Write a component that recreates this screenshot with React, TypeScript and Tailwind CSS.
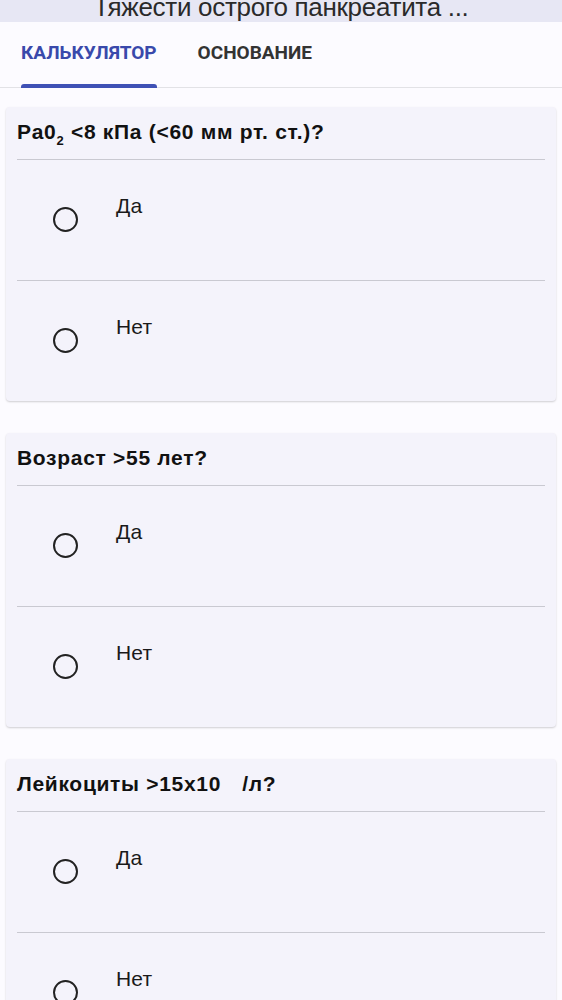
import React from "react";

const font = { fontFamily: '"Liberation Sans", Arial, sans-serif' };

function Radio() {
  return (
    <div className="w-[25px] h-[25px] rounded-full border-[2.5px] border-[#222] shrink-0" />
  );
}

function Option({ label }: { label: string }) {
  return (
    <div className="border-t border-[#c9c9d1] h-[121px] flex items-start pl-[36px]">
      <div className="mt-[47px]">
        <Radio />
      </div>
      <div className="ml-[38px] mt-[34px] text-[21px] leading-[24px] tracking-[0.2px] text-[#1a1a1a]">{label}</div>
    </div>
  );
}

function Card({ title }: { title: React.ReactNode }) {
  return (
    <div className="mx-[6px] bg-[#f4f3fb] rounded-[4px] shadow-[0_1px_2px_rgba(0,0,0,0.18)]">
      <div className="h-[52px] px-[11px] pt-[13px] text-[21px] leading-[24px] tracking-[0.7px] font-bold text-[#111]">
        {title}
      </div>
      <div className="mx-[11px]">
        <Option label="Да" />
        <Option label="Нет" />
      </div>
    </div>
  );
}

export default function App() {
  return (
    <div style={font} className="w-[562px] h-[1000px] overflow-hidden bg-[#fcfbff]">
      <div className="h-[22px] bg-[#e7e7f4] overflow-hidden relative">
        <div className="absolute left-0 right-0 top-[-7px] text-center text-[26px] leading-[28px] tracking-[-0.3px] text-[#2a2a2a]">
          Тяжести острого панкреатита ...
        </div>
      </div>
      <div className="h-[66px] flex items-stretch px-[21px] gap-[41px] border-b border-[#e2e2e6] bg-[#fcfbff]" style={{ fontFamily: 'Roboto, "Liberation Sans", sans-serif' }}>
        <div className="relative flex items-center pb-[3px]">
          <span className="text-[19px] font-bold text-[#3949ab]">КАЛЬКУЛЯТОР</span>
          <div className="absolute left-0 right-0 bottom-[-1px] h-[4px] bg-[#3f51b5] rounded-t-[3px]" />
        </div>
        <div className="flex items-center pb-[3px]">
          <span className="text-[19px] font-bold text-[#333]">ОСНОВАНИЕ</span>
        </div>
      </div>
      <div className="pt-[19px] flex flex-col gap-[32px]">
        <Card
          title={
            <span>
              Pa0<sub className="text-[13px] align-[-3px]">2</sub> &lt;8 кПа (&lt;60 мм рт. ст.)?
            </span>
          }
        />
        <Card title="Возраст >55 лет?" />
        <Card
          title={
            <span>
              Лейкоциты &gt;15x10<span className="inline-block w-[21px]" />/л?
            </span>
          }
        />
      </div>
    </div>
  );
}
